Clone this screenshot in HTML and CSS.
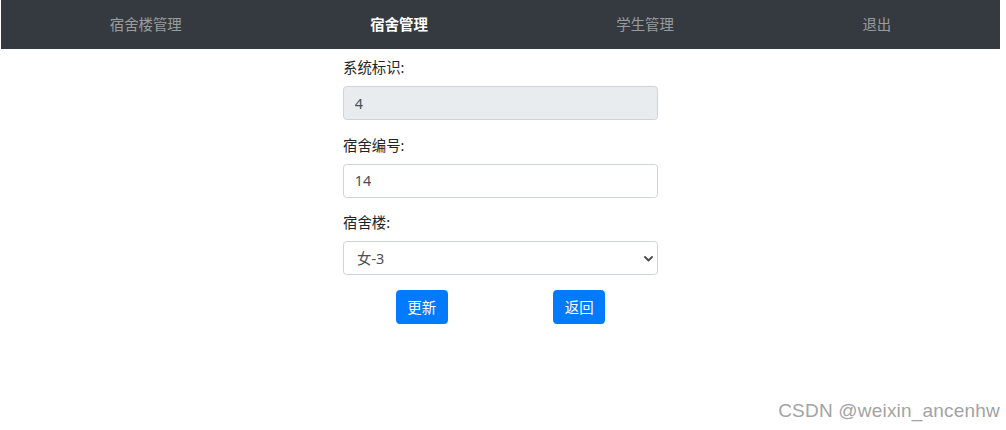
FILE: index.html
```html
<!DOCTYPE html>
<html lang="zh-CN">
<head>
<meta charset="utf-8">
<title>宿舍管理</title>
<link rel="stylesheet" href="styles.css">
</head>
<body>
<div class="page">
  <nav class="navbar">
    <a class="nav-link" href="#">宿舍楼管理</a>
    <a class="nav-link active" href="#">宿舍管理</a>
    <a class="nav-link" href="#">学生管理</a>
    <a class="nav-link" href="#">退出</a>
  </nav>
  <form class="edit-form">
    <div class="group">
      <label class="label">系统标识:</label>
      <input class="control" type="text" value="4" disabled>
    </div>
    <div class="group">
      <label class="label">宿舍编号:</label>
      <input class="control" type="text" value="14">
    </div>
    <div class="group">
      <label class="label">宿舍楼:</label>
      <div class="select-wrap">
        <select class="control select">
          <option>女-3</option>
        </select>
        <svg class="chevron" width="9" height="6" viewBox="0 0 9 6"><path d="M1 1 L4.5 4.5 L8 1" fill="none" stroke="#4a4a4a" stroke-width="1.8" stroke-linecap="round" stroke-linejoin="round"/></svg>
      </div>
    </div>
    <div class="actions">
      <button class="btn" type="button">更新</button>
      <button class="btn" type="button">返回</button>
    </div>
  </form>
  <div class="watermark">CSDN @weixin_ancenhw</div>
</div>
</body>
</html>
```
FILE: styles.css
```css
html, body {
  margin: 0;
  padding: 0;
  background: #fff;
}
body {
  font-family: "Noto Sans", "Noto Sans CJK SC", sans-serif;
  font-size: 14.4px;
  color: #212529;
}
.page {
  width: 999px;
  margin-left: 1px;
  height: 430px;
}
.navbar {
  display: flex;
  align-items: center;
  height: 49px;
  background: #343a40;
  padding: 0 14.5px;
  box-sizing: border-box;
}
.nav-link {
  flex: 1 1 auto;
  text-align: center;
  padding: 7px 14px;
  line-height: 21px;
  color: rgba(255, 255, 255, 0.5);
  text-decoration: none;
}
.nav-link.active {
  color: #fff;
  font-weight: 600;
}
.edit-form {
  width: 315px;
  margin: 8px auto 0;
}
.group {
  margin-bottom: 14.5px;
}
.label {
  display: block;
  line-height: 22px;
  margin-bottom: 7px;
  color: #212529;
}
.control {
  display: block;
  box-sizing: border-box;
  width: 100%;
  height: 34px;
  margin: 0;
  padding: 0 10.8px;
  border: 1px solid #ced4da;
  border-radius: 3.6px;
  background: #fff;
  color: #495057;
  font-family: inherit;
  font-size: 14.4px;
  outline: none;
}
.control:disabled {
  background: #e9ecef;
  color: #495057;
  opacity: 1;
}
.select-wrap {
  position: relative;
}
.select {
  -webkit-appearance: none;
  appearance: none;
  padding-left: 13px;
}
.chevron {
  position: absolute;
  right: 5px;
  top: 15px;
  pointer-events: none;
}
.actions {
  display: grid;
  grid-template-columns: 1fr 1fr;
  justify-items: center;
}
.btn {
  height: 34px;
  padding: 0 10.6px;
  border: 1px solid #007bff;
  border-radius: 3.6px;
  background: #007bff;
  color: #fff;
  font-family: inherit;
  font-size: 14.4px;
  cursor: pointer;
}
.watermark {
  position: absolute;
  right: 6px;
  top: 399px;
  font-family: "Liberation Sans", sans-serif;
  font-size: 19px;
  line-height: 24px;
  color: #a3a3a3;
  letter-spacing: 0.2px;
}
```
